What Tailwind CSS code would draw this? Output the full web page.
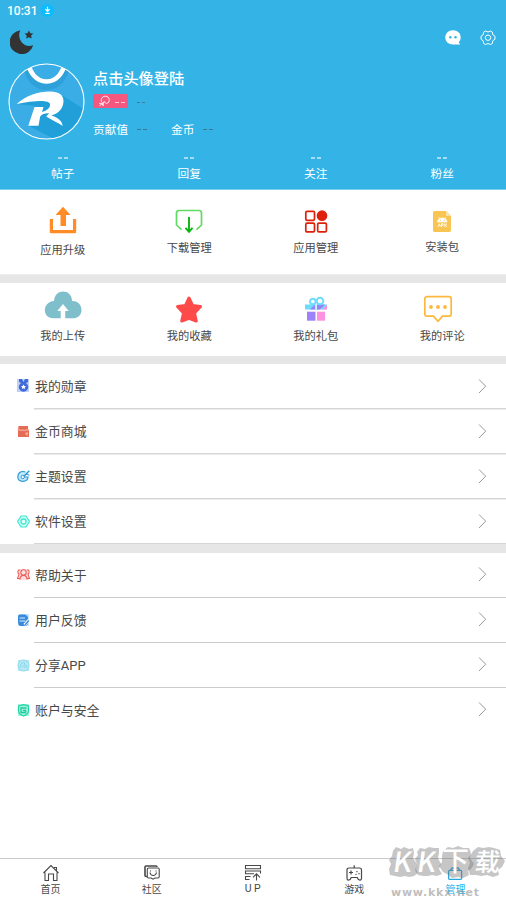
<!DOCTYPE html>
<html lang="zh-CN">
<head>
<meta charset="utf-8">
<title>管理</title>
<script src="https://cdn.jsdelivr.net/npm/@tailwindcss/browser@4"></script>
</head>
<body class="w-[506px] h-[899px] overflow-hidden bg-white font-['Noto_Sans_CJK_SC',sans-serif] text-[#484848]">
<div class="relative flex h-[899px] w-[506px] flex-col">

<header class="h-[190px] shrink-0 bg-[#34b4e6] border-b border-[#7dcfef] text-white">
  <div class="flex h-[21px] items-center gap-[4px] pl-[7px]">
    <span class="font-[Roboto] text-[12px] leading-[20px] font-medium">10:31</span>
    <svg class="-mt-px" width="13" height="13" viewBox="0 0 13 13"><circle cx="6.500" cy="6.500" r="6.500" fill="#0bbcff"/><path d="M6.500 2.800v4M4.400 5.200l2.100 2.200 2.100-2.200M4.300 9.300h4.400" stroke="#fff" fill="none" stroke-width="1.200"/></svg>
  </div>
  <div class="flex h-[40px] items-start justify-between pt-[8px] pl-[10px] pr-[10px]">
    <svg width="24" height="25" viewBox="0 0 24 25"><path d="M10.500 1.200C6.500 7.500 12 20 23.200 16.300A12 12 0 1 1 10.500 1.200Z" fill="#333"/><path d="m18.900 1.500 1.300 2.700 3.100.3-2.200 2.100.6 3-2.800-1.400-2.700 1.400.5-3-2.200-2.100 3-.3z" fill="#333"/></svg>
    <div class="flex gap-[19px] pt-[1px]">
      <svg width="16" height="15" viewBox="0 0 16 15"><path d="M8 .3C12.500.3 15.700 3.300 15.700 7.300c0 2.200-.8 3.800-2 5l1.500 2.200H8C3.500 14.500.3 11.500.3 7.500S3.500.3 8 .3Z" fill="#fff"/><circle cx="5.300" cy="7.300" r="1.200" fill="#34b4e6"/><circle cx="10.500" cy="7.300" r="1.200" fill="#34b4e6"/></svg>
      <svg width="16" height="16" viewBox="0 0 16 16" fill="none" stroke="#fff" stroke-width="1"><path d="M5.500 1q2.500 2 5 0l1.800 1q-.3 3.200 2.700 4.300v2.900q-3 1.100-2.700 4.300l-1.800 1q-2.500-2-5 0l-1.800-1q.3-3.200-2.700-4.300V6.300q3-1.100 2.700-4.300z"/><circle cx="8" cy="7.700" r="2.700"/></svg>
    </div>
  </div>
  <div class="flex h-[84px] pl-[8px]">
    <svg class="mt-[2px] shrink-0" width="77" height="77" viewBox="0 0 77 77">
      <defs><clipPath id="av"><circle cx="38.500" cy="38.500" r="37.500"/></clipPath></defs>
      <g clip-path="url(#av)">
        <rect width="77" height="77" fill="#3bade6"/>
        <path d="M9 41 45 29 55 33 77 47V77H48L21 63 27 43Z" fill="#209fd9"/>
        <path d="M19 0a19.500 21 0 0 0 39 0" fill="none" stroke="#168bc5" stroke-opacity=".35" stroke-width="6" transform="translate(0 3)"/>
        <path d="M20.500-2a18 20.500 0 0 0 36 0" fill="none" stroke="#fff" stroke-width="4.500"/>
        <path d="M8.700 41C17 33 30 28.500 42 28.500c9 0 13.500 3.500 13.500 9.500 0 7-5 12.500-12 14.500 6 2 10.500 5 11.200 10.500-4-3-10-5.500-16.500-9.500l3-3.500c-5 .3-8 1.500-9 3.500L30.500 62.700H20.300L26.500 44h9l-1.500 5c6-1.500 8.500-5 8-8-.8-4.500-16-3.500-33.300 0Z" fill="#fff"/>
      </g>
      <circle cx="38.500" cy="38.500" r="37.500" fill="none" stroke="#fff" stroke-width="1.100"/>
    </svg>
    <div class="pl-[8px]">
      <div class="pt-[5px] text-[15.200px] leading-[22px] font-medium">点击头像登陆</div>
      <div class="mt-[6px] flex h-[14px] items-center">
        <div class="flex h-[14px] w-[35px] items-center rounded-[2px] bg-[#f6577e] pl-[6px]">
          <svg width="11" height="12" viewBox="0 0 11 12" fill="none" stroke="#fff" stroke-width=".9"><path d="M3.300 7.800C.8 5 3 1.200 6.200 1.200c4.800 0 5.600 6.300 1.200 7.400L5 6.500l-1.600 4M.2 8.300l4.200 1M.5 11l2.500-2.500 1.600 2.400"/></svg>
          <span class="ml-[5px] flex gap-[2px]"><i class="h-px w-[4px] mt-[2px] bg-white/70"></i><i class="h-px w-[4px] mt-[2px] bg-white/70"></i></span>
        </div>
        <span class="ml-[9px] mt-[2px] flex gap-[2px]"><i class="h-px w-[3px] bg-[#46788e]"></i><i class="h-px w-[3px] bg-[#46788e]"></i></span>
      </div>
      <div class="mt-[12px] flex items-center text-[11.700px] leading-[18px]">
        <span>贡献值</span>
        <span class="ml-[9px] mt-[1px] flex gap-[2px]"><i class="h-px w-[4px] bg-[#43778e]"></i><i class="h-px w-[4px] bg-[#43778e]"></i></span>
        <span class="ml-[24px]">金币</span>
        <span class="ml-[9px] mt-[1px] flex gap-[2px]"><i class="h-px w-[4px] bg-[#43778e]"></i><i class="h-px w-[4px] bg-[#43778e]"></i></span>
      </div>
    </div>
  </div>
  <div class="grid grid-cols-4 pt-[12px] text-center text-[11.700px] leading-[17px]">
    <div class="pr-px"><div class="flex h-[7px] justify-center gap-[2px]"><i class="h-[2px] w-[4px] bg-white/55"></i><i class="h-[2px] w-[4px] bg-white/55"></i></div>帖子</div>
    <div class="pr-px"><div class="flex h-[7px] justify-center gap-[2px]"><i class="h-[2px] w-[4px] bg-white/55"></i><i class="h-[2px] w-[4px] bg-white/55"></i></div>回复</div>
    <div class="pr-px"><div class="flex h-[7px] justify-center gap-[2px]"><i class="h-[2px] w-[4px] bg-white/55"></i><i class="h-[2px] w-[4px] bg-white/55"></i></div>关注</div>
    <div class="pr-px"><div class="flex h-[7px] justify-center gap-[2px]"><i class="h-[2px] w-[4px] bg-white/55"></i><i class="h-[2px] w-[4px] bg-white/55"></i></div>粉丝</div>
  </div>
</header>

<section class="grid h-[84px] shrink-0 grid-cols-4 text-[11.250px] leading-[16px]">
  <div class="flex flex-col items-center pt-[16px] pr-px">
    <svg width="28" height="28" viewBox="0 0 28 28" fill="#ff8c26"><path d="M14 .8 21.500 9H17v11h-5.500V9H6.500ZM.8 13H4v11h20V13h3.200v13q0 1.300-1.300 1.300H2.100Q.8 27.300.8 26z"/></svg>
    <span class="mt-[7px]">应用升级</span>
  </div>
  <div class="flex flex-col items-center pt-[19px] pr-px">
    <svg width="28" height="26" viewBox="0 0 28 26" fill="none"><path d="M6.500 20.700 1.500 16V4q0-2.500 2.500-2.500h20q2.500 0 2.500 2.500v12l-5 4.700" stroke="#62d964" stroke-width="1.700"/><path d="M14 8v14M10.500 18.800l3.500 4 3.500-4" stroke="#09b50f" stroke-width="1.900"/></svg>
    <span class="mt-[4px]">下载管理</span>
  </div>
  <div class="flex flex-col items-center pt-[19px] pr-px">
    <svg width="24" height="26" viewBox="0 0 24 26" fill="none" stroke="#df210c" stroke-width="1.700"><rect x="1.800" y="2.300" width="8.700" height="9" rx="1.200"/><rect x="1.800" y="14.200" width="8.700" height="8.700" rx="1.200"/><rect x="13.700" y="14.200" width="8.700" height="8.700" rx="1.200"/><circle cx="18" cy="6.700" r="4.500" fill="#df210c"/></svg>
    <span class="mt-[4px]">应用管理</span>
  </div>
  <div class="flex flex-col items-center pt-[20px] pr-px">
    <svg width="18" height="23" viewBox="0 0 18 23"><path d="M1.500 1H13l5 5v14q0 2-1.500 2h-15Q0 22 0 20.500v-18Q0 1 1.500 1Z" fill="#f8c552"/><path d="M13 1v5h5z" fill="#fbe2a4"/><path d="M4.500 12c0-5.500 9.500-5.500 9.500 0zM5.500 7l1.500 2M13 7l-1.500 2" fill="#fff" stroke="#fff" stroke-width=".6"/><circle cx="7.200" cy="10.300" r=".65" fill="#f8c552"/><circle cx="11.300" cy="10.300" r=".65" fill="#f8c552"/><path d="m5 16.800 1.500-3 .8 3M8.500 16.800v-3h1.700v1.600H8.500M12 13.600v3.200M14 13.600 12.200 15.300l1.800 1.600" fill="none" stroke="#fff" stroke-width=".9"/></svg>
    <span class="mt-[5px]">安装包</span>
  </div>
</section>
<div class="h-[9px] shrink-0 bg-[#e6e6e6] border-t border-[#eee]"></div>
<section class="grid h-[73px] shrink-0 grid-cols-4 text-[11.250px] leading-[16px]">
  <div class="flex flex-col items-center pt-[8px] pr-px">
    <svg width="38" height="28" viewBox="0 0 38 28"><path d="M9 27.300C-2 27.300-2 11 10 10c1-13 18-12 18 0 12-.5 13 17 1 17.300Z" fill="#7fbecb"/><path d="m19 13 5.700 7h-3.500v8h-4.500v-8h-3.500z" fill="#fff"/></svg>
    <span class="mt-[8px]">我的上传</span>
  </div>
  <div class="flex flex-col items-center pt-[12px] pr-px">
    <svg width="28" height="29" viewBox="0 0 28 29"><path d="m14 3 3.500 7.500 8 1-6 6.500 1.800 8-7.300-2.700-7.300 2.700 1.800-8-6-6.500 8-1z" fill="#ff4a4a" stroke="#ff4a4a" stroke-width="3" stroke-linejoin="round"/></svg>
    <span class="mt-[3px]">我的收藏</span>
  </div>
  <div class="flex flex-col items-center pt-[13px] pr-px">
    <svg width="24" height="26" viewBox="0 0 24 26"><path d="M1 8.500h22v5H1z" fill="#6cdcfb"/><path d="m11 8.500 1 5H6z" fill="#9780fb"/><path d="M13 8.500h8l-5 5h-3z" fill="#9780fb"/><path d="m23 9-5 4.500h5z" fill="#ff91e1"/><path d="M3 15.700h8.500v9H3z" fill="#9c83fa"/><path d="M13 15.700h8v9h-8z" fill="#ff91e1"/><path d="M12 8.500v5" stroke="#fff" stroke-width="1.300"/><g fill="none" stroke="#6cdcfb" stroke-width="1.900"><circle cx="8.800" cy="5.500" r="2.800"/><circle cx="16" cy="5" r="3.300"/></g></svg>
    <span class="mt-[5px]">我的礼包</span>
  </div>
  <div class="flex flex-col items-center pt-[12px] pr-px">
    <svg class="mr-[9px]" width="30" height="29" viewBox="0 0 30 29"><path d="M4 1.700h22q2.200 0 2.200 2.200V19q0 2.200-2.200 2.200h-6.500L15 26.300l-4.500-5.100H4Q1.800 21.200 1.800 19V3.900Q1.800 1.700 4 1.700Z" fill="none" stroke="#fbb83c" stroke-width="1.700"/><g fill="#fbb83c"><circle cx="8" cy="12" r="1.900"/><circle cx="15" cy="12" r="1.900"/><circle cx="22" cy="12" r="1.900"/></g></svg>
    <span class="mt-[3px]">我的评论</span>
  </div>
</section>
<div class="h-[8px] shrink-0 bg-[#e6e6e6]"></div>

<section class="shrink-0 text-[12.900px] leading-[20px]">
  <div class="flex h-[45px] pl-[17px]"><svg class="mt-[15px] mr-[4px]" width="13" height="13" viewBox="0 0 13 13"><path d="M0 0h12v13H0z" fill="#bed0fa"/><path d="M2 0h3l1.500 3L8 0h3v3L9 4a4.700 4.700 0 1 1-5 0L2 3z" fill="#416bda"/><path d="m6.500 5.500.8 1.500 1.700.2-1.200 1.300.2 1.600-1.500-.8-1.600.8.300-1.600L4 7.200 5.700 7z" fill="#fff"/></svg>
    <div class="flex h-[45px] flex-1 justify-between border-b border-[#d6d6d6] shadow-[0_1px_0_#ebebeb] pt-[12px] pl-px pr-[19px]"><span>我的勋章</span><svg class="mt-[2px]" width="9" height="16" viewBox="0 0 9 16"><path d="m1 1.500 6.700 6.700L1 15" fill="none" stroke="#999"/></svg></div></div>
  <div class="flex h-[45px] pl-[17px]"><svg class="mt-[16px] mr-[4px]" width="13" height="13" viewBox="0 0 13 13"><path d="M1.500 1h9.500v3l1 1v7H1V5z" fill="#e66b55"/><path d="M0 4.900h3q1.500 1.300 3 0 1.500 1.300 3 0h3" fill="none" stroke="#fbc1b5"/><path d="M8 8.700h3M10 7v4" stroke="#ffc0b0" stroke-width=".8"/></svg>
    <div class="flex h-[45px] flex-1 justify-between border-b border-[#d6d6d6] shadow-[0_1px_0_#ebebeb] pt-[12px] pl-px pr-[19px]"><span>金币商城</span><svg class="mt-[2px]" width="9" height="16" viewBox="0 0 9 16"><path d="m1 1.500 6.700 6.700L1 15" fill="none" stroke="#999"/></svg></div></div>
  <div class="flex h-[45px] pl-[17px]"><svg class="mt-[16px] mr-[4px]" width="13" height="13" viewBox="0 0 13 13"><path d="M8.500 2C3.500.3.700 3.500.800 7c.5 6 10 5.500 10.200 0H8" fill="#c5e8fb" stroke="#2798d3" stroke-width="1.200"/><path d="m12.300.7-5.800 6" stroke="#2798d3" stroke-width="1.500"/><circle cx="5.700" cy="7" r="1.700" fill="#fff" stroke="#2798d3"/><path d="m9 4 3.500 1.300" stroke="#2798d3"/></svg>
    <div class="flex h-[45px] flex-1 justify-between border-b border-[#d6d6d6] shadow-[0_1px_0_#ebebeb] pt-[12px] pl-px pr-[19px]"><span>主题设置</span><svg class="mt-[2px]" width="9" height="16" viewBox="0 0 9 16"><path d="m1 1.500 6.700 6.700L1 15" fill="none" stroke="#999"/></svg></div></div>
  <div class="flex h-[45px] pl-[17px]"><svg class="mt-[16px] mr-[4px]" width="13" height="13" viewBox="0 0 13 13"><path d="M4 1h5l1.200 2 2.300 3.500-2.300 3.500L9 12H4l-1.200-2L.5 6.500 2.800 3z" fill="#c7fff4" stroke="#42e6cf" stroke-width="1.200"/><circle cx="6.500" cy="6.500" r="2.500" fill="#e8fffb" stroke="#42e6cf" stroke-width="1.300"/></svg>
    <div class="flex h-[45px] flex-1 justify-between border-b border-[#d6d6d6] pt-[12px] pl-px pr-[19px]"><span>软件设置</span><svg class="mt-[2px]" width="9" height="16" viewBox="0 0 9 16"><path d="m1 1.500 6.700 6.700L1 15" fill="none" stroke="#999"/></svg></div></div>
</section>
<div class="h-[9px] shrink-0 bg-[#e6e6e6]"></div>
<section class="shrink-0 text-[12.900px] leading-[20px]">
  <div class="flex h-[45px] pl-[17px]"><svg class="mt-[15px] mr-[4px]" width="13" height="13" viewBox="0 0 13 13"><path d="M1 1h11v11H1z" fill="#fbe0df"/><g fill="none" stroke="#ee5d59" stroke-width="1.100"><circle cx="6.500" cy="4.500" r="2.700"/><path d="M3 11.500c0-5.500 7-5.500 7 0M3 2C.5 1.500.3 5 2 6.300L.5 10.500H3M10 2c2.500-.5 2.700 3 1 4.300l1.500 4.200H10"/></g></svg>
    <div class="flex h-[45px] flex-1 justify-between border-b border-[#ccc] pt-[12px] pl-px pr-[19px]"><span>帮助关于</span><svg class="mt-[1px]" width="9" height="16" viewBox="0 0 9 16"><path d="m1 1.500 6.700 6.700L1 15" fill="none" stroke="#999"/></svg></div></div>
  <div class="flex h-[45px] pl-[17px]"><svg class="mt-[16px] mr-[4px]" width="13" height="13" viewBox="0 0 13 13"><path d="M3 0h9v12H5z" fill="#c5e4ff"/><path d="M2.500.5H8q3 1 3 4V10l-2 2H3Q.8 11 1 8V2.500q0-2 1.500-2Z" fill="#398bd9"/><path d="M2.500 4H8M2.500 7h6" stroke="#d6edff" stroke-width="1.100"/><path d="M7.500 11 12 6" stroke="#fff" stroke-width="3"/><path d="m8 11 3.800-4.500" stroke="#398bd9" stroke-width="1.500"/></svg>
    <div class="flex h-[45px] flex-1 justify-between border-b border-[#ccc] pt-[12px] pl-px pr-[19px]"><span>用户反馈</span><svg class="mt-[1px]" width="9" height="16" viewBox="0 0 9 16"><path d="m1 1.500 6.700 6.700L1 15" fill="none" stroke="#999"/></svg></div></div>
  <div class="flex h-[45px] pl-[17px]"><svg class="mt-[16px] mr-[4px]" width="13" height="13" viewBox="0 0 13 13"><path d="M1 1h11v11H1z" fill="#b8e8f5"/><g fill="none" stroke="#8cd9eb"><circle cx="6.500" cy="6.500" r="5.500"/><path d="m3 9 1-4 3-2 1 3-3 2M7 8h3L9 6"/></g></svg>
    <div class="flex h-[45px] flex-1 justify-between border-b border-[#ccc] pt-[12px] pl-px pr-[19px]"><span>分享<span class="font-[Roboto] text-[13px]">APP</span></span><svg class="mt-[1px]" width="9" height="16" viewBox="0 0 9 16"><path d="m1 1.500 6.700 6.700L1 15" fill="none" stroke="#999"/></svg></div></div>
  <div class="flex h-[45px] pl-[17px]"><svg class="mt-[16px] mr-[4px]" width="13" height="13" viewBox="0 0 13 13"><path d="M1 0h11v12H1z" fill="#a1f2dc"/><path d="M1.500 2 6.500.7l5 1.300v5q0 3-5 5-5-2-5-5z" fill="none" stroke="#20d3a5" stroke-width="1.200"/><path d="M9.500 4H4v4.500h4.500V6.300H6" fill="none" stroke="#20c99d" stroke-width="1.300"/></svg>
    <div class="flex h-[45px] flex-1 justify-between pt-[12px] pl-px pr-[19px]"><span>账户与安全</span><svg class="mt-[1px]" width="9" height="16" viewBox="0 0 9 16"><path d="m1 1.500 6.700 6.700L1 15" fill="none" stroke="#999"/></svg></div></div>
</section>

<nav class="mt-auto grid h-[41px] shrink-0 grid-cols-5 border-t border-[#c9c9c9] text-center text-[10px] leading-[14px]">
  <div class="flex flex-col items-center pt-[5px]"><svg width="18" height="18" viewBox="0 0 18 18" fill="none" stroke="#484848" stroke-width="1.100"><path d="m1.500 9 7.500-7.500L16.500 9M3 8.500v8h3.500V10h5v6.500H15v-8M12 3.500h2.500V7"/></svg>首页</div>
  <div class="flex flex-col items-center pt-[5px]"><svg width="18" height="18" viewBox="0 0 18 18" fill="none" stroke="#484848" stroke-width="1.100"><path d="M4 12.500H3q-1 0-1-1V3q0-1 1-1h10q1 0 1 1" stroke-width="1.600"/><path d="M5.500 4H15q1.200 0 1.200 1.200v7.600Q16.200 14 15 14h-3l-2 1.200L8 14H5.500q-1.200 0-1.200-1.200V5.200Q4.300 4 5.500 4ZM7 8.500q.5 3 3.200 3t3.300-3"/><path d="M7.500 6.500v1M13 6.500v1"/></svg>社区</div>
  <div class="flex flex-col items-center pt-[5px]"><svg width="18" height="18" viewBox="0 0 18 18" fill="none" stroke="#484848" stroke-width="1.100"><path d="M1.500 1.500h15v3.300h-15zM16.500 9.500V7h-15v2.800H10M6.500 12.500h-5v3h4M12.500 16.500V10M9 13.300l3.500-3.500 3.500 3.500"/></svg><span class="-mr-[2px] font-[Roboto] text-[10.500px] tracking-[2.500px]">UP</span></div>
  <div class="flex flex-col items-center pt-[5px]"><svg width="18" height="18" viewBox="0 0 18 18" fill="none" stroke="#484848" stroke-width="1.200"><path d="M4 4h10.500q2 0 2 2v8.500q0 1.700-1.500 1.700-1.800 0-2.800-2.700H6.300q-1 2.700-2.800 2.700-1.500 0-1.500-1.700V6q0-2 2-2ZM9.200 4V1.200M6 6.500v4M4 8.500h4"/><path d="M12 7v1.200M14 9v1.200M11 10v1"/></svg>游戏</div>
  <div class="flex flex-col items-center pt-[5px] text-[#25b2ea]"><svg width="18" height="18" viewBox="0 0 18 18" fill="none" stroke="#25a8dc" stroke-width="1.300"><rect x="2.600" y="6.300" width="13" height="9" rx="1"/><path d="m4.500 6 1.600-2h6l1.600 2"/></svg>管理</div>
</nav>

<div class="pointer-events-none absolute top-[846px] left-[388px] h-[53px] w-[118px]">
  <svg width="118" height="53" viewBox="0 0 118 53">
    <g fill="#777" fill-opacity=".42"><path d="m5 5 3-4 5 2 3-2 5 2 4-1 1 5-1 5 4 6-1 5 2 4-4 3-5 1-4-1-5 1-5-1-5-1-1-6 2-5-2-4 3-4z"/><path d="m29 6 3-4 5 1 4-2 5 1 5 0 0 5-1 5 3 6-2 5 3 5-5 2-5-1-4 1-5 0-5-1-3-5 2-6-2-5 3-4z"/><path d="m55 5 5-4 5 1 5-2 5 2 6 0 2 5-1 5 4 6-3 5-3 2 1 4-6 3-5-1-6 1-5-4-4-2-4-6 3-4 0-6z"/><path d="m85 5 5-4 5 1 6-1 5 1 6 2 1 6 4 5-3 6-4 3 1 5-6 2-6-2-6 1-5-1-6 0-2-7 2-5-2-5 4-5z"/></g>
    <g fill="#fff" font-family="Noto Sans CJK SC, sans-serif"><text transform="translate(4 26) skewX(-8)" font-size="28" font-weight="500">K</text><text transform="translate(28 26) skewX(-8)" font-size="28" font-weight="500">K</text><text x="54" y="25" font-size="27" font-weight="500">下</text><text transform="translate(86 25) skewX(-6)" font-size="25" font-weight="500">载</text></g>
    <text x="3" y="50" fill="#999" fill-opacity=".65" font-family="DejaVu Sans, sans-serif" font-size="11" font-weight="700" textLength="88">www.kkx.net</text>
  </svg>
</div>
</div>
</body>
</html>
